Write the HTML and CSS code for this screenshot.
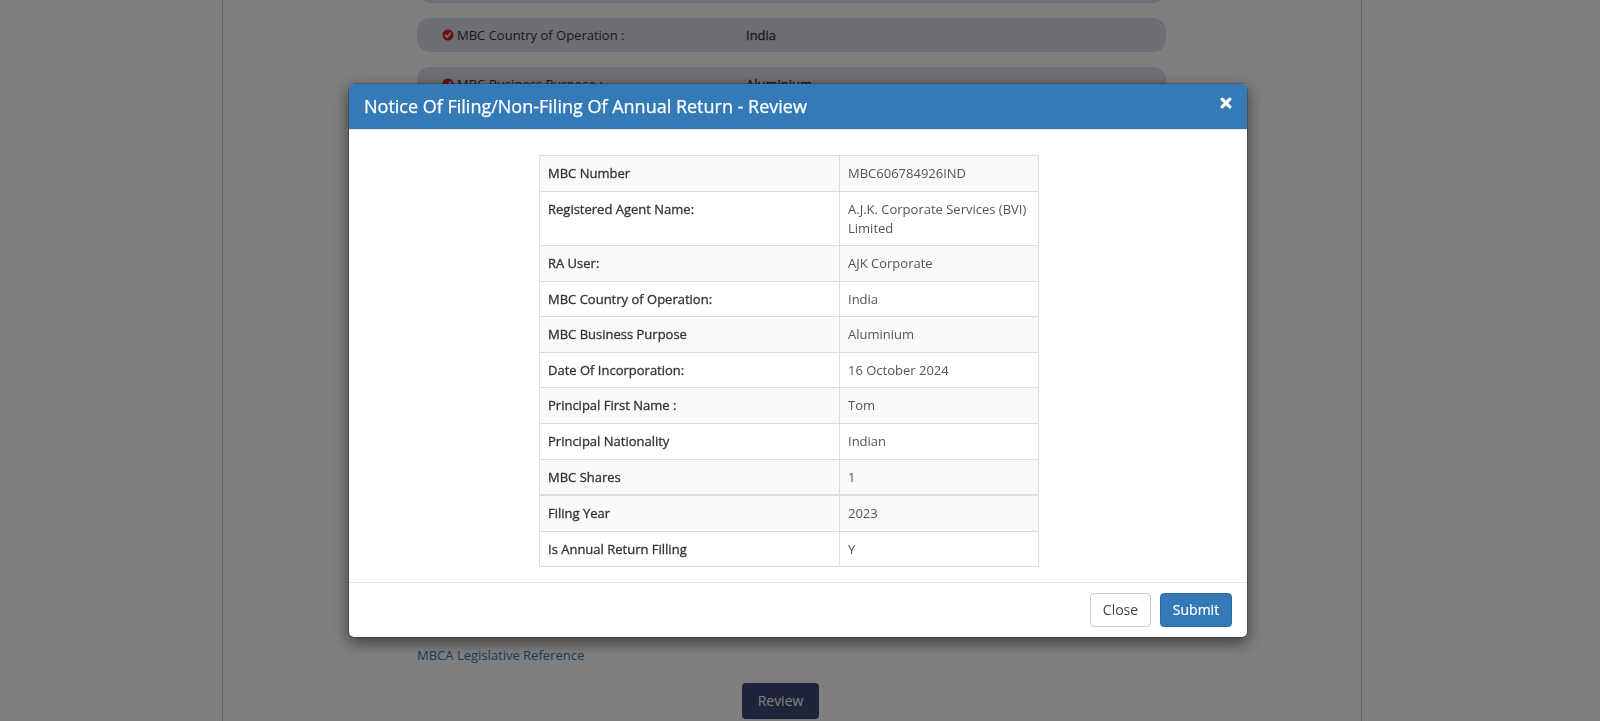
FILE: index.html
```html
<!DOCTYPE html>
<html lang="en">
<head>
<meta charset="utf-8">
<title>Notice Of Filing/Non-Filing Of Annual Return</title>
<link rel="stylesheet" href="styles.css">
</head>
<body>
<main class="page">
  <div class="fields">
    <div class="field"></div>
    <div class="field">
      <svg class="check" viewBox="0 0 12 12"><circle cx="6" cy="6" r="5.6"/><path d="M3 5.8 5.1 7.9 9.1 3.9"/></svg>
      <span class="label">MBC Country of Operation :</span><span class="value faux">India</span>
    </div>
    <div class="field">
      <svg class="check" viewBox="0 0 12 12"><circle cx="6" cy="6" r="5.6"/><path d="M3 5.8 5.1 7.9 9.1 3.9"/></svg>
      <span class="label">MBC Business Purpose :</span><span class="value faux">Aluminium</span>
    </div>
  </div>
  <div class="bottom">
    <a class="link">MBCA Legislative Reference</a>
    <button class="review">Review</button>
  </div>
</main>
<div class="backdrop"></div>
<section class="modal" role="dialog">
  <header class="modal-header">
    <h4 class="title">Notice Of Filing/Non-Filing Of Annual Return - Review</h4>
    <svg class="close-icon" viewBox="0 0 12 12"><path d="M2.2 2.2 9.8 9.8M9.8 2.2 2.2 9.8"/></svg>
  </header>
  <div class="modal-body">
    <table class="table">
      <tr><th>MBC Number</th><td>MBC606784926IND</td></tr>
      <tr><th>Registered Agent Name:</th><td>A.J.K. Corporate Services (BVI) Limited</td></tr>
      <tr><th>RA User:</th><td>AJK Corporate</td></tr>
      <tr><th>MBC Country of Operation:</th><td>India</td></tr>
      <tr><th>MBC Business Purpose</th><td>Aluminium</td></tr>
      <tr><th>Date Of Incorporation:</th><td>16 October 2024</td></tr>
      <tr><th>Principal First Name :</th><td>Tom</td></tr>
      <tr><th>Principal Nationality</th><td>Indian</td></tr>
      <tr><th>MBC Shares</th><td>1</td></tr>
    </table>
    <table class="table">
      <tr><th>Filing Year</th><td>2023</td></tr>
      <tr><th>Is Annual Return Filling</th><td>Y</td></tr>
    </table>
  </div>
  <footer class="modal-footer">
    <button class="btn">Close</button>
    <button class="btn btn-primary">Submit</button>
  </footer>
</section>
</body>
</html>
```
FILE: styles.css
```css
* { box-sizing: border-box; }
body {
  margin: 0;
  height: 721px;
  overflow: hidden;
  background: #fff;
  font: 13px/1.42857 "Open Sans", sans-serif;
  color: #333;
}
.page {
  width: 1140px;
  height: 721px;
  margin-left: 222px;
  padding: 0 194px;
  border: solid #ccc;
  border-width: 0 1px;
  display: flex;
  flex-direction: column;
  justify-content: space-between;
}
.fields {
  display: flex;
  flex-direction: column;
  gap: 15px;
  margin-top: -31px;
}
.field {
  display: flex;
  align-items: center;
  width: 749px;
  height: 34px;
  padding-left: 25px;
  border-radius: 13px;
  background: #dddee8;
}
.check { width: 12px; height: 12px; margin-right: 3px; }
.check circle { fill: #d91c28; }
.check path { fill: none; stroke: #dddee8; stroke-width: 1.9; }
.label { width: 289px; }
.faux { -webkit-text-stroke: 0.3px currentColor; }
.bottom {
  display: flex;
  flex-direction: column;
  align-items: flex-start;
  gap: 18px;
  padding-bottom: 2px;
}
.link { color: #337ab7; }
.review {
  width: 77px;
  height: 36px;
  margin-left: 325px;
  padding: 0 0 2px;
  border: 0;
  border-radius: 4px;
  background: #3c4a76;
  color: #fff;
  font: 14px "Open Sans", sans-serif;
}
.backdrop {
  position: fixed;
  inset: 0;
  background: rgba(0, 0, 0, 0.5);
}
.modal {
  position: fixed;
  top: 83px;
  left: 348px;
  width: 900px;
  border: 1px solid rgba(0, 0, 0, 0.2);
  border-radius: 6px;
  background: #fff;
  background-clip: padding-box;
  box-shadow: 0 5px 15px rgba(0, 0, 0, 0.5);
}
.modal-header {
  display: flex;
  justify-content: space-between;
  height: 46px;
  padding: 9px 15px;
  border-bottom: 1px solid #e5e5e5;
  border-radius: 5px 5px 0 0;
  background: #337ab7;
  background-clip: padding-box;
  color: #fff;
}
.title {
  margin: 0;
  font-size: 18px;
  font-weight: 400;
  line-height: 26px;
  -webkit-text-stroke: 0.25px currentColor;
}
.close-icon { width: 12px; height: 12px; margin-top: 4px; }
.close-icon path { fill: none; stroke: #fff; stroke-width: 3.3; stroke-linecap: round; }
.modal-body { height: 452px; padding: 25.48px 0 0 190px; }
.table {
  width: 500px;
  table-layout: fixed;
  border-collapse: collapse;
}
.table th, .table td {
  padding: 8px;
  border: 1px solid #ddd;
  vertical-align: top;
  text-align: left;
}
.table th { width: 300px; font-weight: 400; -webkit-text-stroke: 0.3px currentColor; }
.table td { color: #555; }
.table tr:nth-child(odd) { background: #f9f9f9; }
.modal-footer {
  display: flex;
  justify-content: flex-end;
  gap: 9px;
  padding: 10px 15px;
  border-top: 1px solid #e5e5e5;
}
.btn {
  width: 61px;
  height: 34px;
  padding: 0 0 2px;
  border: 1px solid #ccc;
  border-radius: 4px;
  background: #fff;
  color: #444;
  font: 14px "Open Sans", sans-serif;
}
.btn-primary {
  width: 72px;
  border-color: #2e6da4;
  background: #337ab7;
  color: #fff;
  -webkit-text-stroke: 0.2px currentColor;
}
```
